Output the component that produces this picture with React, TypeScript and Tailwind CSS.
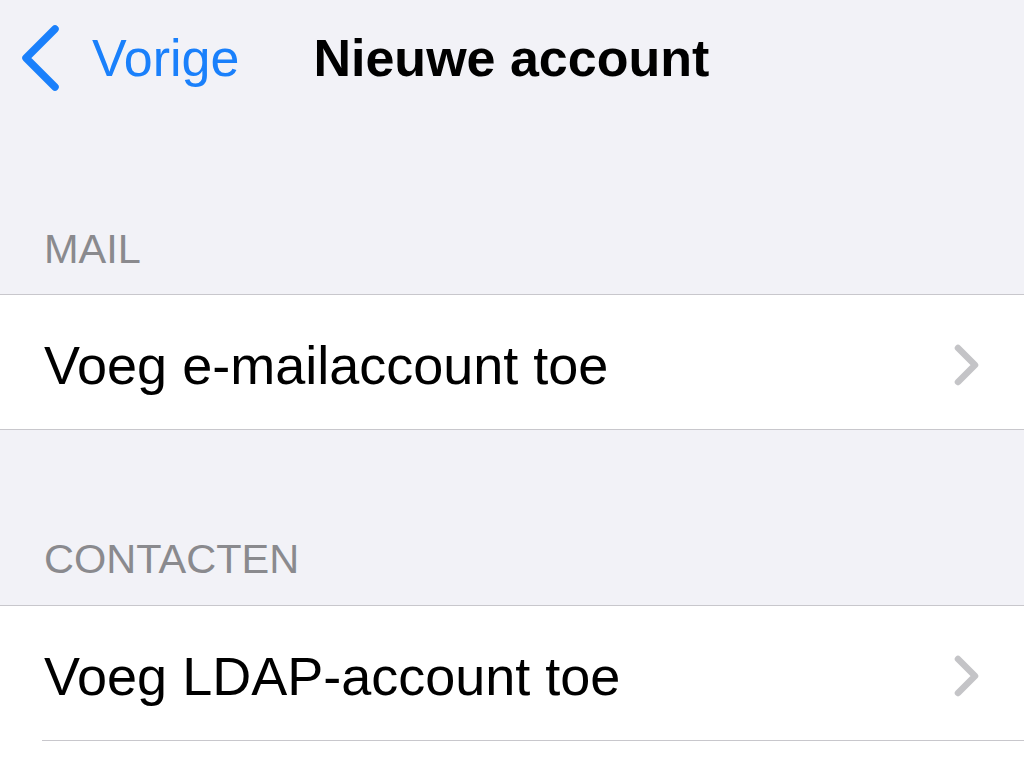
const font = { fontFamily: '"Liberation Sans", Arial, sans-serif' }

function Disclosure() {
  return (
    <svg width="26" height="42" viewBox="0 0 26 42" fill="none" className="shrink-0">
      <path
        d="M4 4 L21 21 L4 38"
        stroke="#c4c4c7"
        strokeWidth="6.5"
        strokeLinecap="round"
        strokeLinejoin="round"
      />
    </svg>
  )
}

function BackChevron() {
  return (
    <svg width="42" height="66" viewBox="0 0 42 66" fill="none" className="shrink-0">
      <path
        d="M34 4 L5 33 L34 62"
        stroke="#1a80fb"
        strokeWidth="7.5"
        strokeLinecap="round"
        strokeLinejoin="round"
      />
    </svg>
  )
}

function SectionHeader({ label, className = '' }: { label: string; className?: string }) {
  return (
    <div className={`px-[44px] ${className}`}>
      <span className="block h-[41px] text-[41.5px] leading-[41px] text-[#8a8a8e]">{label}</span>
    </div>
  )
}

function Row({ label, last = false }: { label: string; last?: boolean }) {
  return (
    <div className="bg-white">
      <div className="flex h-[134px] items-center justify-between pl-[44px] pr-[44px] pt-[6px]">
        <span className="text-[54px] leading-none text-black">{label}</span>
        <Disclosure />
      </div>
      {last && <div className="ml-[42px] h-px bg-[#c8c7cc]" />}
    </div>
  )
}

export default function App() {
  return (
    <div className="flex h-[781px] w-[1024px] flex-col overflow-hidden bg-[#f2f2f7]" style={font}>
      {/* Navigation bar */}
      <div className="flex h-[116px] items-center">
        <div className="ml-[21px] flex items-center">
          <BackChevron />
          <span className="ml-[29px] text-[52px] leading-none text-[#1a80fb]">Vorige</span>
        </div>
        <span className="ml-[74px] text-[52px] font-bold leading-none text-black">Nieuwe account</span>
      </div>

      <SectionHeader label="MAIL" className="pt-[112px] pb-[25px]" />
      <div className="h-px bg-[#c8c7cc]" />
      <Row label="Voeg e-mailaccount toe" />
      <div className="h-px bg-[#c8c7cc]" />

      <SectionHeader label="CONTACTEN" className="pt-[108px] pb-[26px]" />
      <div className="h-px bg-[#c8c7cc]" />
      <Row label="Voeg LDAP-account toe" last />
      <div className="flex-1 bg-white" />
    </div>
  )
}
